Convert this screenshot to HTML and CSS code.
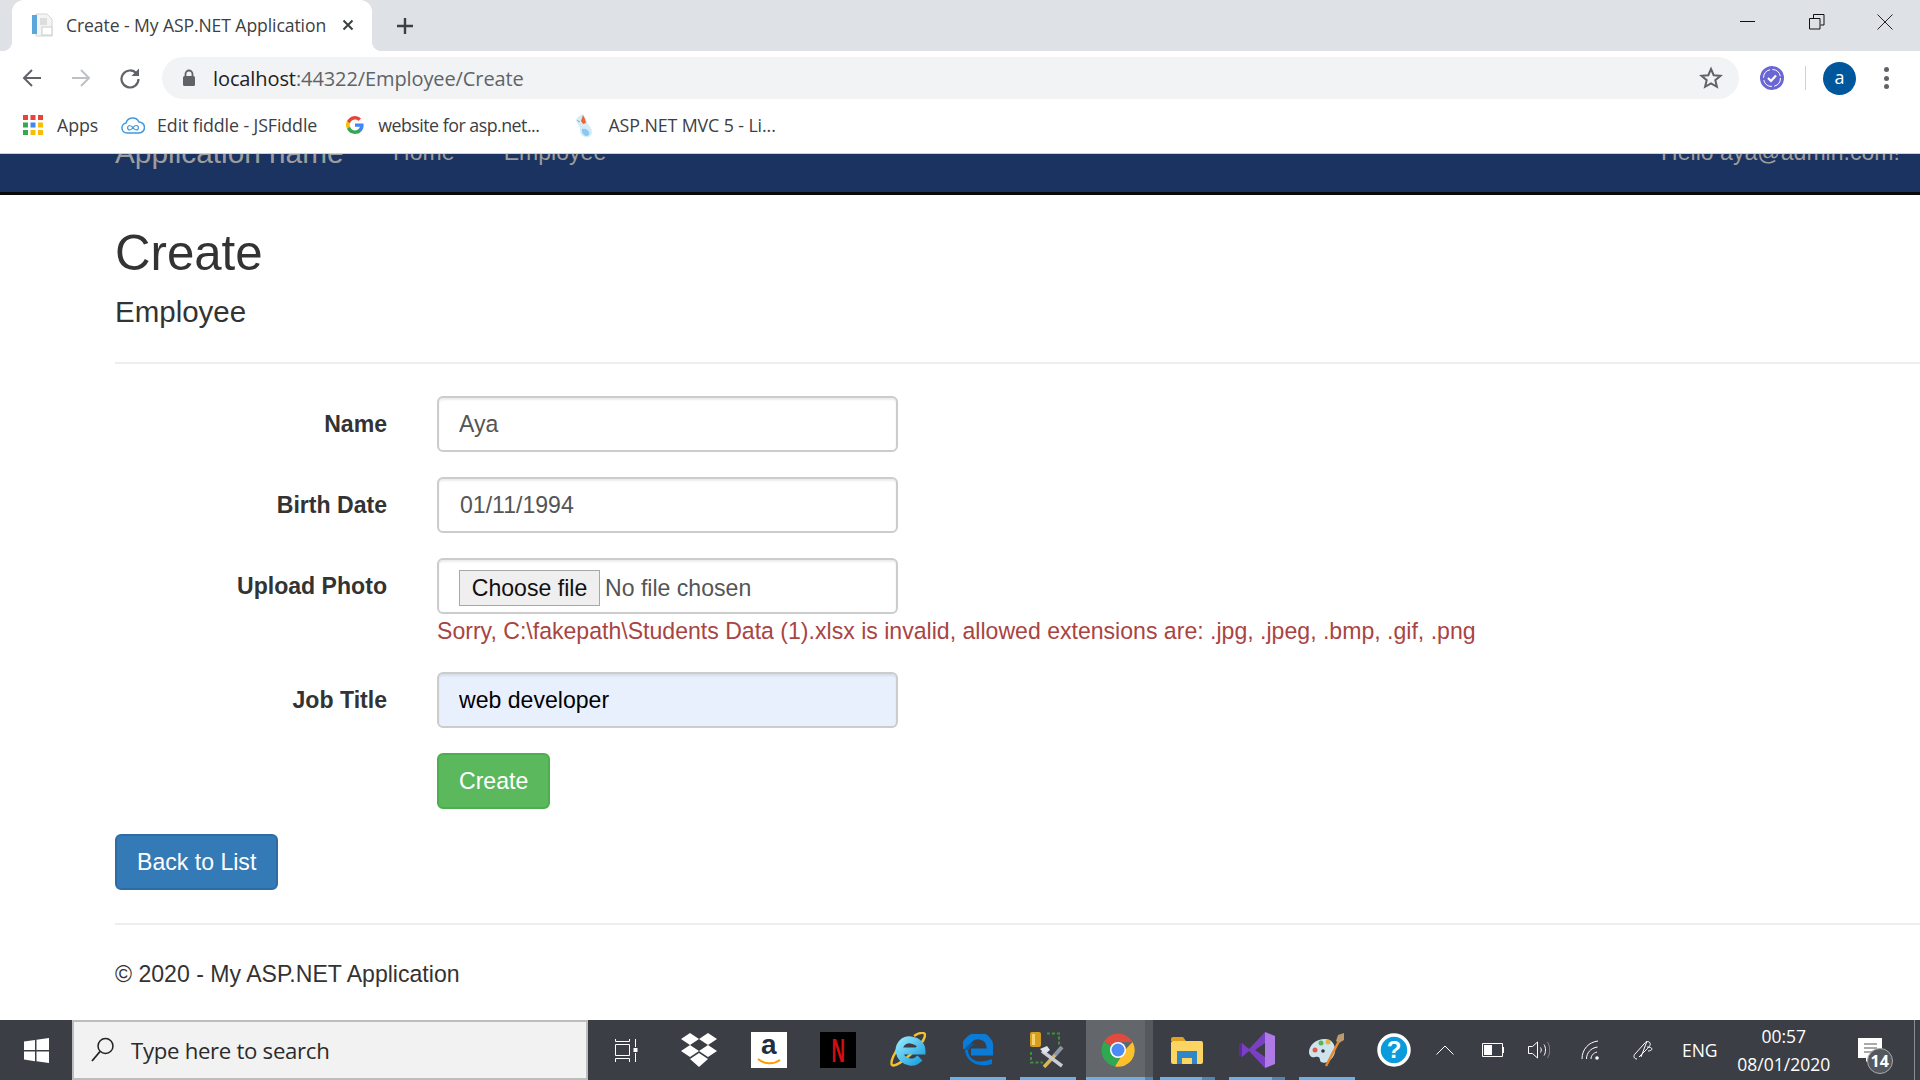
FILE: index.html
```html
<!DOCTYPE html>
<html lang="en">

<head>
    <meta charset="UTF-8">
    <title>Create - My ASP.NET Application</title>
    <link rel="stylesheet" href="styles.css">
</head>

<body>
    <div class="tabstrip">
        <div class="tab">
            <svg class="tab-icon" width="24" height="24" viewBox="0 0 24 24">
                <path d="M6 1h11l5 5v17H6z" fill="#f4f4f4" stroke="#d5d5d5"/>
                <rect x="2" y="2" width="5" height="19" fill="#5ba7dc"/>
                <rect x="10" y="5" width="7" height="7" fill="#ddd"/>
                <rect x="12" y="14" width="10" height="8" fill="#fff" stroke="#ccc"/>
            </svg>
            <span class="tab-title">Create - My ASP.NET Application</span>
            <svg class="tab-close" width="12" height="12" viewBox="0 0 12 12"><path d="M1.500 1.500l9 9M10.500 1.500l-9 9" stroke="#3c4043" stroke-width="2"/></svg>
        </div>
        <svg class="new-tab" width="20" height="20" viewBox="0 0 20 20"><path d="M10 2v16M2 10h16" stroke="#3c4043" stroke-width="2.400"/></svg>
        <div class="window-btns">
            <svg width="16" height="16" viewBox="0 0 16 16"><path d="M0 7.500h15" stroke="#111" stroke-width="1"/></svg>
            <svg width="16" height="16" viewBox="0 0 16 16"><path d="M.5 4.500h10.500v10.500H.5zM4.500 4V.5H15v10.500h-3.500" fill="none" stroke="#111"/></svg>
            <svg width="16" height="16" viewBox="0 0 16 16"><path d="M.5.5l15 15M15.500.5l-15 15" stroke="#222"/></svg>
        </div>
    </div>

    <div class="toolbar">
        <svg width="22" height="22" viewBox="0 0 22 22"><path d="M20 11H3M11 3l-8 8 8 8" fill="none" stroke="#5f6368" stroke-width="2"/></svg>
        <svg width="22" height="22" viewBox="0 0 22 22"><path d="M2 11h17M11 3l8 8-8 8" fill="none" stroke="#bdc1c6" stroke-width="2"/></svg>
        <svg width="22" height="22" viewBox="0 0 22 22"><path d="M17.500 6.500A8.500 8.500 0 1 0 19.500 12" fill="none" stroke="#5f6368" stroke-width="2.200"/><path d="M20 1.500V9h-7.500z" fill="#5f6368"/></svg>
        <div class="omnibox">
            <svg class="lock" width="14" height="18" viewBox="0 0 14 18"><path d="M3.500 8V5a3.500 3.500 0 0 1 7 0v3" fill="none" stroke="#5f6368" stroke-width="1.800"/><rect x="1" y="7" width="12" height="10" rx="1.500" fill="#5f6368"/></svg>
            <span class="url"><span class="url-host">localhost</span>:44322/Employee/Create</span>
            <svg class="star" width="24" height="24" viewBox="0 0 24 24"><path d="M12 3l2.700 6.200 6.800.6-5.200 4.400 1.600 6.600L12 17.300l-5.900 3.500 1.600-6.600-5.200-4.400 6.800-.6z" fill="none" stroke="#5f6368" stroke-width="2"/></svg>
        </div>
        <svg class="ext" width="24" height="24" viewBox="0 0 24 24"><circle cx="12" cy="12" r="12" fill="#6a67d4"/><circle cx="12" cy="12" r="8.500" fill="none" stroke="#fff" stroke-dasharray="11 2.400"/><path d="M8 12l3 3 5-5.500" fill="none" stroke="#fff" stroke-width="2.200"/></svg>
        <div class="tb-sep"></div>
        <div class="avatar">a</div>
        <div class="menu-dots"><i></i><i></i><i></i></div>
    </div>

    <div class="bookmarks">
        <svg class="bm-apps" width="20" height="20" viewBox="0 0 20 20">
            <rect width="5" height="5" fill="#ea4335"/><rect x="7.500" width="5" height="5" fill="#ea4335"/><rect x="15" width="5" height="5" fill="#ea4335"/>
            <rect y="7.500" width="5" height="5" fill="#34a853"/><rect x="7.500" y="7.500" width="5" height="5" fill="#4285f4"/><rect x="15" y="7.500" width="5" height="5" fill="#fbbc05"/>
            <rect y="15" width="5" height="5" fill="#34a853"/><rect x="7.500" y="15" width="5" height="5" fill="#fbbc05"/><rect x="15" y="15" width="5" height="5" fill="#fbbc05"/>
        </svg>
        <span class="bm-text bm-first">Apps</span>
        <svg class="bm-cloud" width="24" height="18" viewBox="0 0 24 18"><path d="M6 17a5 5 0 0 1-1-9.900A7 7 0 0 1 18 6a5.500 5.500 0 0 1 0 11z" fill="none" stroke="#3f9ae0" stroke-width="1.500"/><path d="M12 12c-1.500-2-2-2.500-3.200-2.500a2.200 2.200 0 0 0 0 4.400c1.200 0 1.700-.5 3.200-2.400s2-2 3.200-2a2.200 2.200 0 0 1 0 4.400c-1.200 0-1.700-.5-3.200-2.400z" fill="none" stroke="#3f9ae0" stroke-width="1.200"/></svg>
        <span class="bm-text bm-second">Edit fiddle - JSFiddle</span>
        <svg class="bm-g" width="18" height="18" viewBox="0 0 18 18">
            <path d="M17.600 9.200c0-.6 0-1.200-.2-1.700H9v3.300h4.800a4.100 4.100 0 0 1-1.800 2.700v2.200h2.900c1.700-1.600 2.700-3.800 2.700-6.500z" fill="#4285f4"/>
            <path d="M9 18c2.400 0 4.500-.8 5.900-2.200L12 13.600c-.8.500-1.800.9-3 .9-2.300 0-4.300-1.600-5-3.700H1v2.300A9 9 0 0 0 9 18z" fill="#34a853"/>
            <path d="M4 10.800a5.400 5.400 0 0 1 0-3.500V5H1a9 9 0 0 0 0 8.100z" fill="#fbbc05"/>
            <path d="M9 3.600c1.300 0 2.500.5 3.400 1.300L15 2.400A9 9 0 0 0 1 5l3 2.300c.700-2.100 2.700-3.700 5-3.700z" fill="#ea4335"/>
        </svg>
        <span class="bm-text bm-third">website for asp.net...</span>
        <svg class="bm-asp" width="20" height="26" viewBox="0 0 20 26"><path d="M2 8c2-4 5-5 7-6 2 4 4 5 4 9 2 2 5 5 5 9s-4 6-7 5-5-3-5-7-3-6-4-10z" fill="#d5ecfa"/><path d="M8 17c2-1 6 0 7 3s-1 4-3 4-5-4-4-7z" fill="#8cc8f0"/><path d="M9 3l2 4 1 4-3 1-2-3z" fill="#f0652f"/><path d="M3 8c1 1 2 2 3 2" stroke="#7cc4ea"/></svg>
        <span class="bm-text">ASP.NET MVC 5 - Li...</span>
    </div>

    <div class="page">
        <div class="navbar">
            <div class="navbar-inner">
                <span class="brand">Application name</span>
                <span class="nav-link nav-home">Home</span>
                <span class="nav-link">Employee</span>
                <span class="nav-link nav-hello">Hello aya@admin.com!</span>
            </div>
        </div>

        <div class="container">
            <h2>Create</h2>
            <h4>Employee</h4>
            <hr class="head-rule">

            <form class="form">
                <label class="form-label" for="name">Name</label>
                <input class="form-control" id="name" type="text" value="Aya">

                <label class="form-label" for="birth">Birth Date</label>
                <input class="form-control date" id="birth" type="text" value="01/11/1994">

                <label class="form-label" for="photo">Upload Photo</label>
                <div>
                    <div class="form-control file">
                        <button class="file-btn" id="photo" type="button">Choose file</button>
                        <span>No file chosen</span>
                    </div>
                    <p class="field-error">Sorry, C:\fakepath\Students Data (1).xlsx is invalid, allowed extensions are: .jpg, .jpeg, .bmp, .gif, .png</p>
                </div>

                <label class="form-label" for="job">Job Title</label>
                <input class="form-control filled" id="job" type="text" value="web developer">

                <span></span>
                <div><button class="btn btn-success" type="button">Create</button></div>
            </form>

            <a class="btn btn-primary" href="#">Back to List</a>
            <hr class="foot-rule">
            <footer>© 2020 - My ASP.NET Application</footer>
        </div>
    </div>

    <div class="taskbar">
        <div class="start">
            <svg width="25" height="25" viewBox="0 0 25 25"><path d="M0 3.500l11-1.500v10H0zM12.500 1.800L25 0v12H12.500zM0 13.500h11v9.700L0 21.500zM12.500 13.500H25V25l-12.500-1.800z" fill="#fff"/></svg>
        </div>
        <div class="search">
            <svg width="24" height="26" viewBox="0 0 24 26"><circle cx="14.500" cy="9" r="7.500" fill="none" stroke="#222" stroke-width="1.500"/><path d="M9 14.500L1 24" stroke="#222" stroke-width="1.800"/></svg>
            <span>Type here to search</span>
        </div>
        <div class="task-view">
            <svg width="23" height="23" viewBox="0 0 23 23"><path d="M.5 0v2.500h14V0M.5 5.500h14v11H.5zM.5 23v-3.500h14V23M20.500 0v8M20.500 14v9" fill="none" stroke="#fff"/><rect x="18.500" y="9" width="4" height="4" fill="#fff"/></svg>
        </div>

        <div class="slot">
            <svg width="36" height="34" viewBox="0 0 36 34" fill="#fff"><path d="M9 0l9 6-9 6-9-6zM27 0l9 6-9 6-9-6zM9 12l9 6-9 6-9-6zM27 12l9 6-9 6-9-6zM18 20l9 6-9 8-9-8z"/></svg>
        </div>
        <div class="slot">
            <div class="amazon"><span>a</span><svg width="24" height="8" viewBox="0 0 24 8"><path d="M1 1c6 5 15 6 22 1" fill="none" stroke="#f90" stroke-width="2"/></svg></div>
        </div>
        <div class="slot">
            <div class="netflix"><span>N</span></div>
        </div>
        <div class="slot">
            <svg width="36" height="36" viewBox="0 0 36 36">
                <defs><linearGradient id="ieBlue" x1="0" y1="0" x2="1" y2="1"><stop offset="0" stop-color="#8fe6fb"/><stop offset="1" stop-color="#1b9fe0"/></linearGradient></defs>
                <path d="M24 4c6-4 11-4 11-1 0 4-6 12-14 19C11 31 4 35 2 33c-2-3 2-12 9-21" fill="none" stroke="#f2c230" stroke-width="2.400"/>
                <path d="M9 19c0-7 5-12 12-11s11 5 11 11H11M30 26c-3 3-6 5-10 4-6-1-10-5-11-11" fill="none" stroke="url(#ieBlue)" stroke-width="7"/>
            </svg>
        </div>
        <div class="slot">
            <svg width="30" height="32" viewBox="0 0 30 32"><path d="M1 15C3 6 10 1 17 2c8 1 11 8 10 16H8" fill="none" stroke="#0a7cd8" stroke-width="7"/><path d="M5 12c-1 7 2 13 8 15 5 1 11 0 16-2v5c-6 2-15 2-20-2-7-5-8-12-6-17z" fill="#0078d7"/><path d="M1 16c2-4 6-7 11-6-3 1-5 3-6 6z" fill="#055fa8"/></svg>
            <i class="underline"></i>
        </div>
        <div class="slot">
            <svg width="36" height="36" viewBox="0 0 36 36">
                <rect y="0" width="11" height="15" rx="2" fill="#d89c1e"/><rect x="2" y="2" width="3" height="11" fill="#f5d36a"/>
                <path d="M17 1.500h12v12M1 20v10.500h12" fill="none" stroke="#3f8f3a" stroke-width="2" stroke-dasharray="3 2"/>
                <path d="M14 35l12-13" stroke="#d8b65c" stroke-width="3.500"/><path d="M25 23l7-8" stroke="#8d97a3" stroke-width="4"/>
                <path d="M12 19l20 15" stroke="#c6cdd6" stroke-width="3.500"/><path d="M10 17l7-3 3 4-5 4z" fill="#dfe4ea"/>
            </svg>
            <i class="underline"></i>
        </div>
        <div class="slot slot-active">
            <svg width="34" height="34" viewBox="0 0 34 34">
                <path d="M17 17L3 8.500A16.500 16.500 0 0 1 31.500 9H17z" fill="#e04a3f"/>
                <path d="M3 8.500A16.500 16.500 0 0 0 14 33.500L21 21z" fill="#2fa84f"/>
                <path d="M31.500 9A16.500 16.500 0 0 1 14 33.500L24 17z" fill="#fbc02d"/>
                <circle cx="17" cy="17" r="8" fill="#fff"/><circle cx="17" cy="17" r="6.500" fill="#4c8bf5"/>
            </svg>
            <i class="underline underline-stack underline-chrome"></i>
        </div>
        <div class="slot">
            <svg width="32" height="27" viewBox="0 0 32 27"><path d="M0 2a2 2 0 0 1 2-2h10l3 4H0z" fill="#e0a11d"/><rect y="4" width="32" height="23" rx="2" fill="#fcd462"/><path d="M6 27V14h20v13h-5v-6H11v6z" fill="#2f86c9"/></svg>
            <i class="underline underline-stack"></i>
        </div>
        <div class="slot">
            <svg width="36" height="36" viewBox="0 0 36 36"><path d="M26 0l10 4v28l-10 4z" fill="#b07ae6"/><path d="M26 0L10 17 3 11 0 13v10l3 2 7-6 16 17V25L16 18l10-7z" fill="#7b3fc4"/><path d="M0 13l3-2v14l-3-2z" fill="#5c2a99"/></svg>
            <i class="underline underline-stack"></i>
        </div>
        <div class="slot">
            <svg width="36" height="34" viewBox="0 0 36 34">
                <path d="M16 6C6 6 0 13 0 19c0 4 3 6 6 5s5 0 5 3 5 4 9 1 7-8 6-13-4-9-10-9z" fill="#cfe3ef"/>
                <circle cx="6" cy="17" r="2.500" fill="#e4594c"/><circle cx="12" cy="10" r="2.500" fill="#5ab552"/><circle cx="19" cy="9" r="2.500" fill="#e8b23a"/><circle cx="14" cy="18" r="1.800" fill="#333"/>
                <path d="M30 8L17 33" stroke="#e8862a" stroke-width="2.500"/><path d="M29 2l6-2 0 7-5 3-3-2z" fill="#bd9a6c"/>
            </svg>
            <i class="underline"></i>
        </div>
        <div class="slot slot-help">
            <svg width="34" height="34" viewBox="0 0 34 34"><circle cx="17" cy="17" r="15" fill="#0a9bdc" stroke="#fff" stroke-width="3.500"/><text class="help-mark" x="17" y="25" text-anchor="middle">?</text></svg>
        </div>

        <div class="tray tray-chevron"><svg width="18" height="10" viewBox="0 0 18 10"><path d="M.5 9.500L9 1l8.500 8.500" fill="none" stroke="#fff"/></svg></div>
        <div class="tray tray-battery"><svg width="22" height="14" viewBox="0 0 22 14"><path d="M.5.5h20v13H.5z" fill="none" stroke="#fff"/><rect x="2" y="2" width="8" height="10" fill="#fff"/><rect x="21" y="4" width="1" height="6" fill="#fff"/></svg></div>
        <div class="tray tray-speaker"><svg width="22" height="18" viewBox="0 0 22 18"><path d="M.5 5.500h4l5-4.500v16l-5-4.500h-4z" fill="none" stroke="#fff"/><path d="M12.500 6.500c1 1.500 1 3.500 0 5M16 3.500c2 3 2 8 0 11" fill="none" stroke="#fff"/><path d="M19.500 1c3 4.500 3 11.500 0 16" fill="none" stroke="#888"/></svg></div>
        <div class="tray tray-wifi"><svg width="18" height="20" viewBox="0 0 18 20"><path d="M1 19C1 9 8 2 17 1M5.500 19c0-6 4-11 11-12M10 19c0-3 2-6 6-7" fill="none" stroke="#fff"/><circle cx="16" cy="18" r="1.800" fill="#fff"/></svg></div>
        <div class="tray tray-pen"><svg width="20" height="20" viewBox="0 0 20 20"><path d="M4 19c-3 0-4-3-2-5l9-10c2-3 5-3 6-1s-1 4-3 6l-8 8" fill="none" stroke="#fff"/><path d="M14 1l-6 16M14 7c3 0 5 1 5 2s-2 2-4 2" fill="none" stroke="#fff"/></svg></div>
        <div class="tray tray-lang">ENG</div>
        <div class="tray tray-clock"><span>00:57</span><span>08/01/2020</span></div>
        <div class="tray tray-notify">
            <svg width="24" height="24" viewBox="0 0 24 24"><path d="M0 0h24v20H12l-4 4v-4H0z" fill="#fff"/><path d="M6 6h13M6 10h13M6 14h13" stroke="#555"/></svg>
            <span class="notify-count">14</span>
        </div>
        <div class="tray-edge"></div>
    </div>
</body>

</html>
```

FILE: styles.css
```css
html, body {
    margin: 0;
    padding: 0;
    height: 100%;
    overflow: hidden;
}

body {
    width: 1920px;
    height: 1080px;
    display: flex;
    flex-direction: column;
    background-color: #fff;
    font-family: "Liberation Sans", Arial, sans-serif;
    color: #333;
}

/* browser chrome */
.tabstrip {
    height: 51px;
    flex: none;
    display: flex;
    align-items: center;
    background-color: #dee1e6;
}

.tab {
    position: relative;
    width: 360px;
    height: 51px;
    margin-left: 12px;
    box-sizing: border-box;
    padding: 0 18px 2px;
    display: flex;
    align-items: center;
    background-color: #fff;
    border-radius: 12px 12px 0 0;
}

/* the little flares at the foot of the tab */
.tab::before,
.tab::after {
    content: "";
    position: absolute;
    bottom: 0;
    width: 10px;
    height: 10px;
}

.tab::before {
    left: -10px;
    background: radial-gradient(circle at 0 0, transparent 10px, #fff 10.500px);
}

.tab::after {
    right: -10px;
    background: radial-gradient(circle at 100% 0, transparent 10px, #fff 10.500px);
}

.tab-icon {
    flex: none;
}

.tab-title {
    margin-left: 12px;
    font: 17.600px "Open Sans", sans-serif;
    letter-spacing: -0.1px;
    color: #3c4043;
    white-space: nowrap;
}

.tab-close {
    margin-left: auto;
}

.new-tab {
    margin-left: 23px;
}

.window-btns {
    margin-left: auto;
    width: 153px;
    padding-right: 27px;
    display: flex;
    justify-content: space-between;
    align-items: center;
    margin-bottom: 8px;
}

.toolbar {
    height: 54px;
    flex: none;
    box-sizing: border-box;
    padding: 0 0 0 21px;
    display: flex;
    align-items: center;
    gap: 27px;
    background-color: #fff;
}

.omnibox {
    width: 1577px;
    height: 42px;
    margin-left: -6px;
    box-sizing: border-box;
    padding: 0 16px 0 20px;
    display: flex;
    align-items: center;
    background-color: #f1f3f4;
    border-radius: 21px;
}

.url {
    margin-left: 17px;
    font: 20px "Open Sans", sans-serif;
    letter-spacing: -0.1px;
    color: #5f6368;
}

.url-host {
    color: #202124;
}

.star {
    margin-left: auto;
}

.ext {
    margin-left: -6px;
}

.tb-sep {
    width: 1px;
    height: 24px;
    margin-left: -6px;
    background-color: #d0d2d5;
}

.avatar {
    width: 33px;
    height: 33px;
    margin-left: -10px;
    border-radius: 50%;
    background-color: #01579b;
    color: #fff;
    font: 18px/31px "Open Sans", sans-serif;
    text-align: center;
}

.menu-dots {
    margin-left: 1px;
    display: flex;
    flex-direction: column;
    gap: 3.500px;
}

.menu-dots i {
    width: 5px;
    height: 5px;
    border-radius: 50%;
    background-color: #5f6368;
}

.bookmarks {
    height: 49px;
    flex: none;
    box-sizing: border-box;
    padding: 0 0 8px 23px;
    display: flex;
    align-items: center;
    background-color: #fff;
    border-bottom: 1px solid #d0d0d0;
}

.bm-text {
    font: 17.800px "Open Sans", sans-serif;
    letter-spacing: -0.1px;
    color: #3c4043;
    white-space: nowrap;
}

.bm-first {
    margin-left: 14px;
}

.bm-cloud {
    margin-left: 23px;
    margin-right: 12px;
}

.bm-g {
    margin-left: 29px;
    margin-right: 14px;
}

.bm-third {
    letter-spacing: -0.5px;
}

.bm-asp {
    margin-left: 35px;
    margin-right: 14px;
}

/* the page, scrolled a little so the navbar is cut at the top */
.page {
    flex: 1;
    min-height: 0;
    overflow: hidden;
}

.navbar {
    height: 41px;
    box-sizing: border-box;
    overflow: hidden;
    background-color: #1b3361;
    border-bottom: 3px solid #0a0a0a;
}

.navbar-inner {
    padding: 0 20px 0 115px;
    display: flex;
    align-items: flex-start;
    color: #9d9d9d;
}

.brand {
    margin-top: -18px;
    font-size: 29.800px;
}

.nav-link {
    margin-top: -15px;
    font-size: 23.080px;
}

.nav-home {
    margin-left: 49.500px;
    margin-right: 49px;
}

.nav-hello {
    margin-left: auto;
}

.container {
    padding-left: 115px;
    font-size: 23.080px;
}

h2 {
    margin: 31px 0 0;
    font-size: 49.200px;
    font-weight: 500;
    line-height: 54px;
}

h4 {
    margin: 16px 0 0;
    font-size: 29.500px;
    font-weight: 500;
    line-height: 32px;
}

hr {
    margin: 0;
    border: 0;
    border-top: 2px solid #eee;
}

.head-rule {
    margin-top: 34px;
}

.form {
    margin-top: 32px;
    display: grid;
    grid-template-columns: 272px 1fr;
    column-gap: 50px;
    row-gap: 25px;
    align-items: start;
}

.form-label {
    padding-top: 12px;
    text-align: right;
    font-weight: 700;
    line-height: 32px;
}

.form-control {
    display: block;
    width: 461px;
    height: 56px;
    box-sizing: border-box;
    padding: 0 20px;
    font: 23.080px "Liberation Sans", Arial, sans-serif;
    color: #555;
    background-color: #fff;
    border: 2px solid #ccc;
    border-radius: 6px;
    box-shadow: inset 0 2px 2px rgba(0, 0, 0, .075);
}

.date {
    padding-left: 21px;
}

.file {
    padding-top: 4px;
    display: flex;
    align-items: center;
    gap: 5px;
}

.file-btn {
    width: 141px;
    height: 36px;
    padding: 0;
    font: 23.080px "Liberation Sans", Arial, sans-serif;
    color: #111;
    background-color: #efefef;
    border: 1px solid #a8a8a8;
}

.filled {
    color: #000;
    background-color: #e8f0fe;
}

.field-error {
    margin: 1px 0 0;
    font-size: 23.080px;
    line-height: 32px;
    color: #a94442;
    white-space: nowrap;
}

.btn {
    display: inline-block;
    box-sizing: border-box;
    height: 56px;
    padding: 0 20px;
    font: 23.080px/52px "Liberation Sans", Arial, sans-serif;
    color: #fff;
    text-decoration: none;
    border-radius: 6px;
}

.btn-success {
    line-height: 50px;
    background-color: #5cb85c;
    border: 2px solid #4cae4c;
}

.btn-primary {
    margin-top: 25px;
    vertical-align: top;
    background-color: #337ab7;
    border: 2px solid #2e6da4;
}

.foot-rule {
    margin-top: 33px;
}

footer {
    margin-top: 33px;
    line-height: 32px;
}

/* windows taskbar */
.taskbar {
    height: 60px;
    flex: none;
    display: flex;
    align-items: stretch;
    color: #fff;
    background-color: #3b3e45;
}

.start {
    width: 72px;
    display: flex;
    align-items: center;
    justify-content: center;
}

.search {
    width: 516px;
    box-sizing: border-box;
    padding-left: 17px;
    display: flex;
    align-items: center;
    gap: 16px;
    font: 22.200px "Open Sans", sans-serif;
    letter-spacing: -0.3px;
    color: #2b2b2b;
    background-color: #f2f2f2;
    border: 2px solid #bdbdbd;
}

.task-view {
    width: 76px;
    display: flex;
    align-items: center;
    justify-content: center;
}

.slot {
    width: 69.800px;
    position: relative;
    display: flex;
    align-items: center;
    justify-content: center;
}

.slot-help {
    margin-left: -3px;
}

.slot-active {
    background: linear-gradient(to right, transparent 3px, #63666a 3px, #63666a 62px, #55585d 62px);
}

.underline {
    position: absolute;
    left: 7px;
    right: 7px;
    bottom: 0;
    height: 3px;
    background-color: #6cb0e8;
}

.underline-stack {
    background: linear-gradient(to right, #6cb0e8 76%, #4e86b5 76%);
}

.slot-active .underline-chrome {
    left: 3px;
    right: 0;
    background: linear-gradient(to right, #6cb0e8 88%, #4e86b5 88%);
}

.amazon {
    width: 36px;
    height: 36px;
    display: flex;
    flex-direction: column;
    align-items: center;
    background-color: #fff;
    color: #232f3e;
}

.amazon span {
    height: 26px;
    font: 700 28px/26px "Liberation Sans", Arial, sans-serif;
}

.netflix {
    width: 36px;
    height: 36px;
    background-color: #000;
    color: #d40d12;
    font: 700 34px/36px "Liberation Sans", Arial, sans-serif;
    text-align: center;
}

.netflix span {
    display: inline-block;
    transform: scaleX(.55);
}

.help-mark {
    font: 700 24px "Liberation Sans", Arial, sans-serif;
    fill: #fff;
}

.tray {
    display: flex;
    align-items: center;
    justify-content: center;
    flex: none;
}

.tray-chevron { width: 40px; margin-left: -4px; }
.tray-battery { width: 56px; }
.tray-speaker { width: 36px; }
.tray-wifi { width: 66px; }
.tray-pen { width: 40px; }
.tray-lang { width: 74px; font: 17.500px "Open Sans", sans-serif; }

.tray-clock {
    width: 94px;
    flex-direction: column;
    gap: 7px;
    font: 17.500px/21px "Open Sans", sans-serif;
}

.tray-notify {
    width: 78px;
    position: relative;
}

.notify-count {
    position: absolute;
    left: 36px;
    top: 28px;
    width: 26px;
    height: 26px;
    box-sizing: border-box;
    border: 1px solid #aaa;
    border-radius: 50%;
    background-color: #55585e;
    font: 700 16px/24px "Open Sans", sans-serif;
    text-align: center;
}

.tray-edge {
    width: 1px;
    margin-left: 5px;
    background-color: #8a8c90;
}
```
